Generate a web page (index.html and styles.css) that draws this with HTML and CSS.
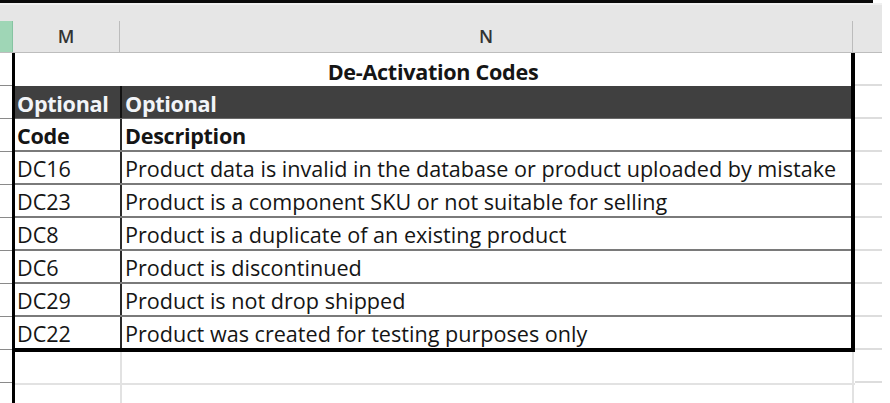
FILE: index.html
```html
<!DOCTYPE html>
<html>
<head>
<meta charset="utf-8">
<link rel="stylesheet" href="styles.css">
</head>
<body>
<div class="topbar"></div>
<div class="colhead">
  <div class="hcell corner"><div class="lbl green"></div></div>
  <div class="hcell colm"><div class="lbl">M</div></div>
  <div class="hcell coln"><div class="lbl">N</div></div>
  <div class="hcell colo"><div class="lbl"></div></div>
</div>
<div class="sheet">
  <div class="gutter"></div>
  <div class="leftedge"></div>
  <div class="content">
    <div class="table">
      <div class="row title"><div class="cell merged bold">De-Activation Codes</div></div>
      <div class="row dark"><div class="cell c1 bold">Optional</div><div class="cell c2 bold">Optional</div></div>
      <div class="row"><div class="cell c1 bold">Code</div><div class="cell c2 bold">Description</div></div>
      <div class="row"><div class="cell c1">DC16</div><div class="cell c2">Product data is invalid in the database or product uploaded by mistake</div></div>
      <div class="row"><div class="cell c1">DC23</div><div class="cell c2">Product is a component SKU or not suitable for selling</div></div>
      <div class="row"><div class="cell c1">DC8</div><div class="cell c2">Product is a duplicate of an existing product</div></div>
      <div class="row"><div class="cell c1">DC6</div><div class="cell c2">Product is discontinued</div></div>
      <div class="row"><div class="cell c1">DC29</div><div class="cell c2">Product is not drop shipped</div></div>
      <div class="row last"><div class="cell c1">DC22</div><div class="cell c2">Product was created for testing purposes only</div></div>
    </div>
    <div class="erow"><div class="ecell e1"></div><div class="ecell e2"></div></div>
    <div class="erow"><div class="ecell e1"></div><div class="ecell e2"></div></div>
  </div>
  <div class="rightcol"></div>
</div>
</body>
</html>
```
FILE: styles.css
```css
html, body {
  margin: 0;
  padding: 0;
  background: #ffffff;
  width: 890px;
  height: 403px;
  overflow: hidden;
  font-family: "Open Sans", "Liberation Sans", sans-serif;
}
.topbar {
  width: 873px;
  height: 3px;
  background: #0a0a0a;
}
.colhead {
  display: flex;
  width: 882px;
  height: 50px;
  background: #e6e6e6;
  border-top: 2px solid #f0f0f0;
  border-bottom: 1px solid #bdbdbd;
  box-sizing: border-box;
}
.hcell {
  display: flex;
  flex-direction: column;
  justify-content: flex-end;
}
.lbl {
  height: 31px;
  box-sizing: border-box;
  display: flex;
  align-items: center;
  justify-content: center;
  font-family: "Open Sans", "Liberation Sans", sans-serif;
  font-size: 18px;
  font-weight: 600;
  color: #333333;
  padding-bottom: 1px;
}
.corner { width: 13px; }
.green { background: #9fd6b6; border-right: 1px solid #86c4a2; }
.colm { width: 107px; }
.colm .lbl { border-right: 1px solid #bcbcbc; }
.coln { width: 733px; }
.coln .lbl { border-right: 1px solid #bcbcbc; }
.colo { width: 29px; }

.sheet {
  display: flex;
  height: 350px;
}
.gutter {
  width: 12px;
  background: repeating-linear-gradient(to bottom, transparent 0 32px, #8a8a8a 32px 33px);
}
.leftedge {
  width: 3px;
  background: #000;
}
.content {
  width: 840px;
  display: flex;
  flex-direction: column;
}
.table {
  flex-shrink: 0;
  border-right: 4px solid #000;
  border-bottom: 4px solid #000;
}
.row {
  display: flex;
  height: 33px;
  box-sizing: border-box;
  border-bottom: 2px solid #7a7a7a;
}
.row.last { border-bottom: none; height: 31px; }
.row.title { border-bottom: none; }
.row.dark {
  background: #404040;
  border-bottom: 1px solid #6a6a6a;
}
.cell {
  display: flex;
  align-items: flex-end;
  padding-bottom: 1px;
  box-sizing: border-box;
  font-size: 21.6px;
  line-height: 27px;
  color: #151515;
  white-space: nowrap;
}
.bold { font-weight: 700; letter-spacing: -0.3px; }
.c1 {
  width: 107px;
  padding-left: 2px;
  border-right: 2px solid #2a2a2a;
}
.c2 {
  flex: 1;
  padding-left: 3px;
}
.merged {
  flex: 1;
  justify-content: center;
}
.dark .cell { color: #f2f4f8; }
.dark .c1 { border-right-color: #111; }
.erow {
  flex-shrink: 0;
  display: flex;
  height: 33px;
  box-sizing: border-box;
  border-bottom: 2px solid #e2e2e2;
}
.e1 { width: 105px; border-right: 2px solid #e2e2e2; }
.e2 { flex: 1; border-right: 2px solid #e2e2e2; margin-right: 1px; }
.rightcol {
  width: 27px;
  background: repeating-linear-gradient(to bottom, transparent 0 31px, #dddddd 31px 33px);
}
```
